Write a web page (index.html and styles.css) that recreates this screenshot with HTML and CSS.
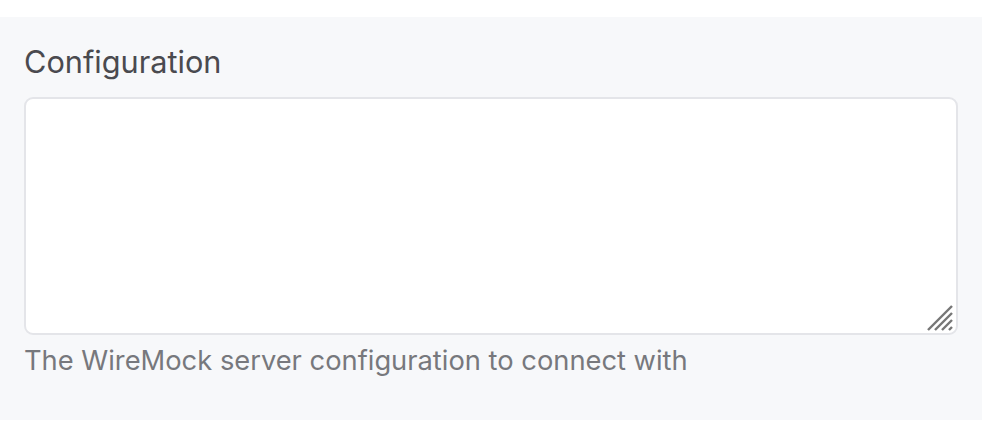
FILE: index.html
```html
<!DOCTYPE html>
<html lang="en">
<head>
<meta charset="utf-8">
<title>Configuration</title>
<link rel="stylesheet" href="styles.css">
</head>
<body>
<section class="panel">
  <label class="field-label" for="config">Configuration</label>
  <div class="field-box">
    <textarea id="config" class="field-input"></textarea>
    <svg class="resize-grip" width="28" height="28" viewBox="0 0 28 28" aria-hidden="true">
      <g stroke="#767676" stroke-width="2.4" stroke-linecap="butt">
        <line x1="2" y1="26" x2="26" y2="2"/>
        <line x1="9" y1="26" x2="26" y2="9"/>
        <line x1="16" y1="26" x2="26" y2="16"/>
        <line x1="23" y1="26" x2="26" y2="23"/>
      </g>
    </svg>
  </div>
  <p class="field-hint">The WireMock server configuration to connect with</p>
</section>
</body>
</html>
```
FILE: styles.css
```css
html, body {
  margin: 0;
  padding: 0;
  background: #ffffff;
}
body {
  padding-top: 17px;
  font-family: Inter, "Noto Sans", "Liberation Sans", sans-serif;
}
.panel {
  background: #f7f8fa;
  padding: 24px 24px 0 24px;
  height: 403px;
  box-sizing: border-box;
  display: flex;
  flex-direction: column;
}
.field-label {
  font-size: 30.7px;
  line-height: 42px;
  color: #4a4a4f;
  margin-bottom: 14px;
}
.field-box {
  position: relative;
  height: 238px;
}
.field-input {
  display: block;
  width: 100%;
  height: 100%;
  box-sizing: border-box;
  border: 2px solid #e4e5e9;
  border-radius: 9px;
  background: #ffffff;
  resize: none;
  outline: none;
  margin: 0;
}
.resize-grip {
  position: absolute;
  right: 4px;
  bottom: 3px;
}
.field-hint {
  margin: 9px 0 0 0;
  font-size: 27.3px;
  line-height: 34px;
  color: #77787d;
}
```
